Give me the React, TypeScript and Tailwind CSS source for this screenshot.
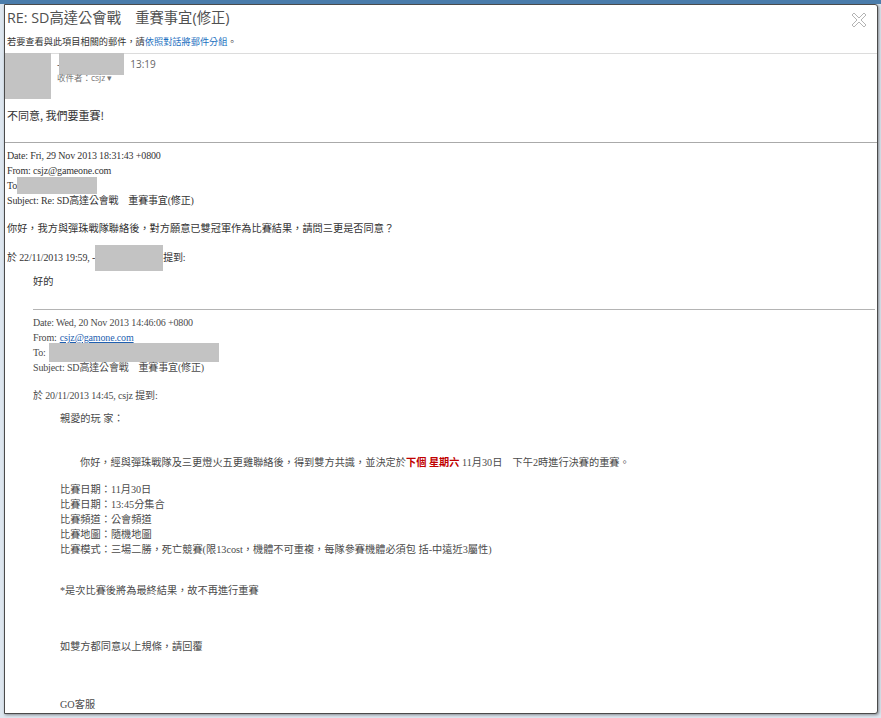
import type { ReactNode } from 'react';

const serif = 'font-["Liberation_Serif","Noto_Sans_CJK_TC",serif]';

function Redact({ className }: { className: string }) {
  return <span className={`inline-block bg-[#c3c3c3] ${className}`} />;
}

function Line({ children, className = '' }: { children: ReactNode; className?: string }) {
  return <div className={`h-[15px] leading-[15px] whitespace-nowrap flex items-center ${className}`}>{children}</div>;
}

// latin header lines of the quoted mails
const hdr = 'text-[10px] tracking-[-0.15px]';
const cjk = 'text-[10.2px]';

function CloseIcon() {
  return (
    <svg width="16" height="16" viewBox="0 0 16 16" className="block">
      <polygon
        points="1,3 3,1 8,6 13,1 15,3 10,8 15,13 13,15 8,10 3,15 1,13 6,8"
        fill="white"
        stroke="#b4b4b4"
        strokeWidth="1"
        strokeLinejoin="round"
      />
    </svg>
  );
}

export default function App() {
  return (
    <div className="w-[881px] h-[718px] overflow-hidden bg-[#dde6ef] border-t-[4px] border-[#4a7cab] pl-[4px]">
      <div className="relative w-[874px] h-[710px] bg-white border border-[#4b4b4b] rounded-tr-[3px] rounded-br-[3px] overflow-hidden shadow-[1px_1px_3px_rgba(0,0,0,0.4)] flex flex-col">
        {/* header */}
        <div className="px-[2px] pt-[2px] pb-[4px] border-b border-[#dcdcdc] font-['Open_Sans','Noto_Sans_CJK_TC',sans-serif]">
          <div className="text-[14.3px] leading-[22px] text-[#505050] whitespace-nowrap">RE: SD高達公會戰　重賽事宜(修正)</div>
          <div className="mt-[6px] text-[9.2px] leading-[14px] text-[#333] whitespace-nowrap">
            若要查看與此項目相關的郵件，請<span className="text-[#1a6fc0]">依照對話將郵件分組</span>。
          </div>
        </div>
        <div className="absolute top-[7px] right-[10px]">
          <CloseIcon />
        </div>

        {/* sender */}
        <div className="flex font-['Open_Sans','Noto_Sans_CJK_TC',sans-serif]">
          <div className="-ml-[5px] -mt-[1px] w-[51px] h-[46px] bg-[#c3c3c3] shrink-0" />
          <div className="ml-[6px] -mt-[1px] flex flex-col">
            <div className="flex items-center h-[22px]">
              <span className="text-[10px] text-[#555]">-</span>
              <Redact className="w-[65px] h-[22px] -ml-[1px]" />
              <span className="ml-[6px] text-[10px] text-[#666]">13:19</span>
            </div>
            <div className="-mt-[3px] text-[8.5px] leading-[12px] text-[#777] whitespace-nowrap">收件者：csjz ▾</div>
          </div>
        </div>
        <div className="px-[2px] mt-[8px] text-[11px] leading-[16px] font-normal text-[#333] font-['Noto_Sans_CJK_TC',sans-serif] whitespace-nowrap">
          不同意, 我們要重賽!
        </div>

        {/* quoted reply */}
        <div className={`mt-[19px] border-t border-[#aaaaaa] pt-[5px] px-[2px] text-[#333] ${serif}`}>
          <Line className={hdr}>Date: Fri, 29 Nov 2013 18:31:43 +0800</Line>
          <Line className={hdr}>From: csjz@gameone.com</Line>
          <Line className={hdr}>
            To<Redact className="w-[80px] h-[17px]" />
          </Line>
          <Line className={hdr}>Subject: Re: SD高達公會戰　重賽事宜(修正)</Line>
          <Line className={`mt-[13px] ${cjk}`}>你好，我方與彈珠戰隊聯絡後，對方願意已雙冠軍作為比賽結果，請問三更是否同意？</Line>
          <Line className={`mt-[14px] ${hdr}`}>
            於 22/11/2013 19:59, -<Redact className="w-[68px] h-[26px] shrink-0" />提到:
          </Line>
          <Line className={`mt-[9px] ml-[26px] ${cjk}`}>好的</Line>

          {/* nested quote */}
          <div className="ml-[26px] mt-[20px] border-t border-[#b4b4b4] pt-[5px] text-[#4a4a4a]">
            <Line className={hdr}>Date: Wed, 20 Nov 2013 14:46:06 +0800</Line>
            <Line className={hdr}>
              From: <span className="ml-[3px] text-[#1f5fb0] underline">csjz@gamone.com</span>
            </Line>
            <Line className={hdr}>
              To: <Redact className="ml-[3px] w-[170px] h-[19px] shrink-0" />
            </Line>
            <Line className={hdr}>Subject: SD高達公會戰　重賽事宜(修正)</Line>
            <Line className={`mt-[13px] ${hdr}`}>於 20/11/2013 14:45, csjz 提到:</Line>

            <div className="ml-[27px]">
              <Line className={`mt-[8px] ${cjk}`}>親愛的玩 家：</Line>
              <Line className={`mt-[29px] ml-[20px] ${cjk}`}>
                你好，經與彈珠戰隊及三更燈火五更雞聯絡後，得到雙方共識，並決定於
                <span className="text-[#c00000] font-bold">下個 星期六</span>
                &nbsp;11月30日　下午2時進行決賽的重賽。
              </Line>
              <div className={`mt-[12px] ${cjk}`}>
                <Line>比賽日期：11月30日</Line>
                <Line>比賽日期：13:45分集合</Line>
                <Line>比賽頻道：公會頻道</Line>
                <Line>比賽地圖：隨機地圖</Line>
                <Line>比賽模式：三場二勝，死亡競賽(限13cost，機體不可重複，每隊參賽機體必須包 括-中遠近3屬性)</Line>
              </div>
              <Line className={`mt-[26px] ${cjk}`}>*是次比賽後將為最終結果，故不再進行重賽</Line>
              <Line className={`mt-[41px] ${cjk}`}>如雙方都同意以上規條，請回覆</Line>
              <Line className={`mt-[43px] ${cjk}`}>GO客服</Line>
            </div>
          </div>
        </div>
      </div>
    </div>
  );
}
